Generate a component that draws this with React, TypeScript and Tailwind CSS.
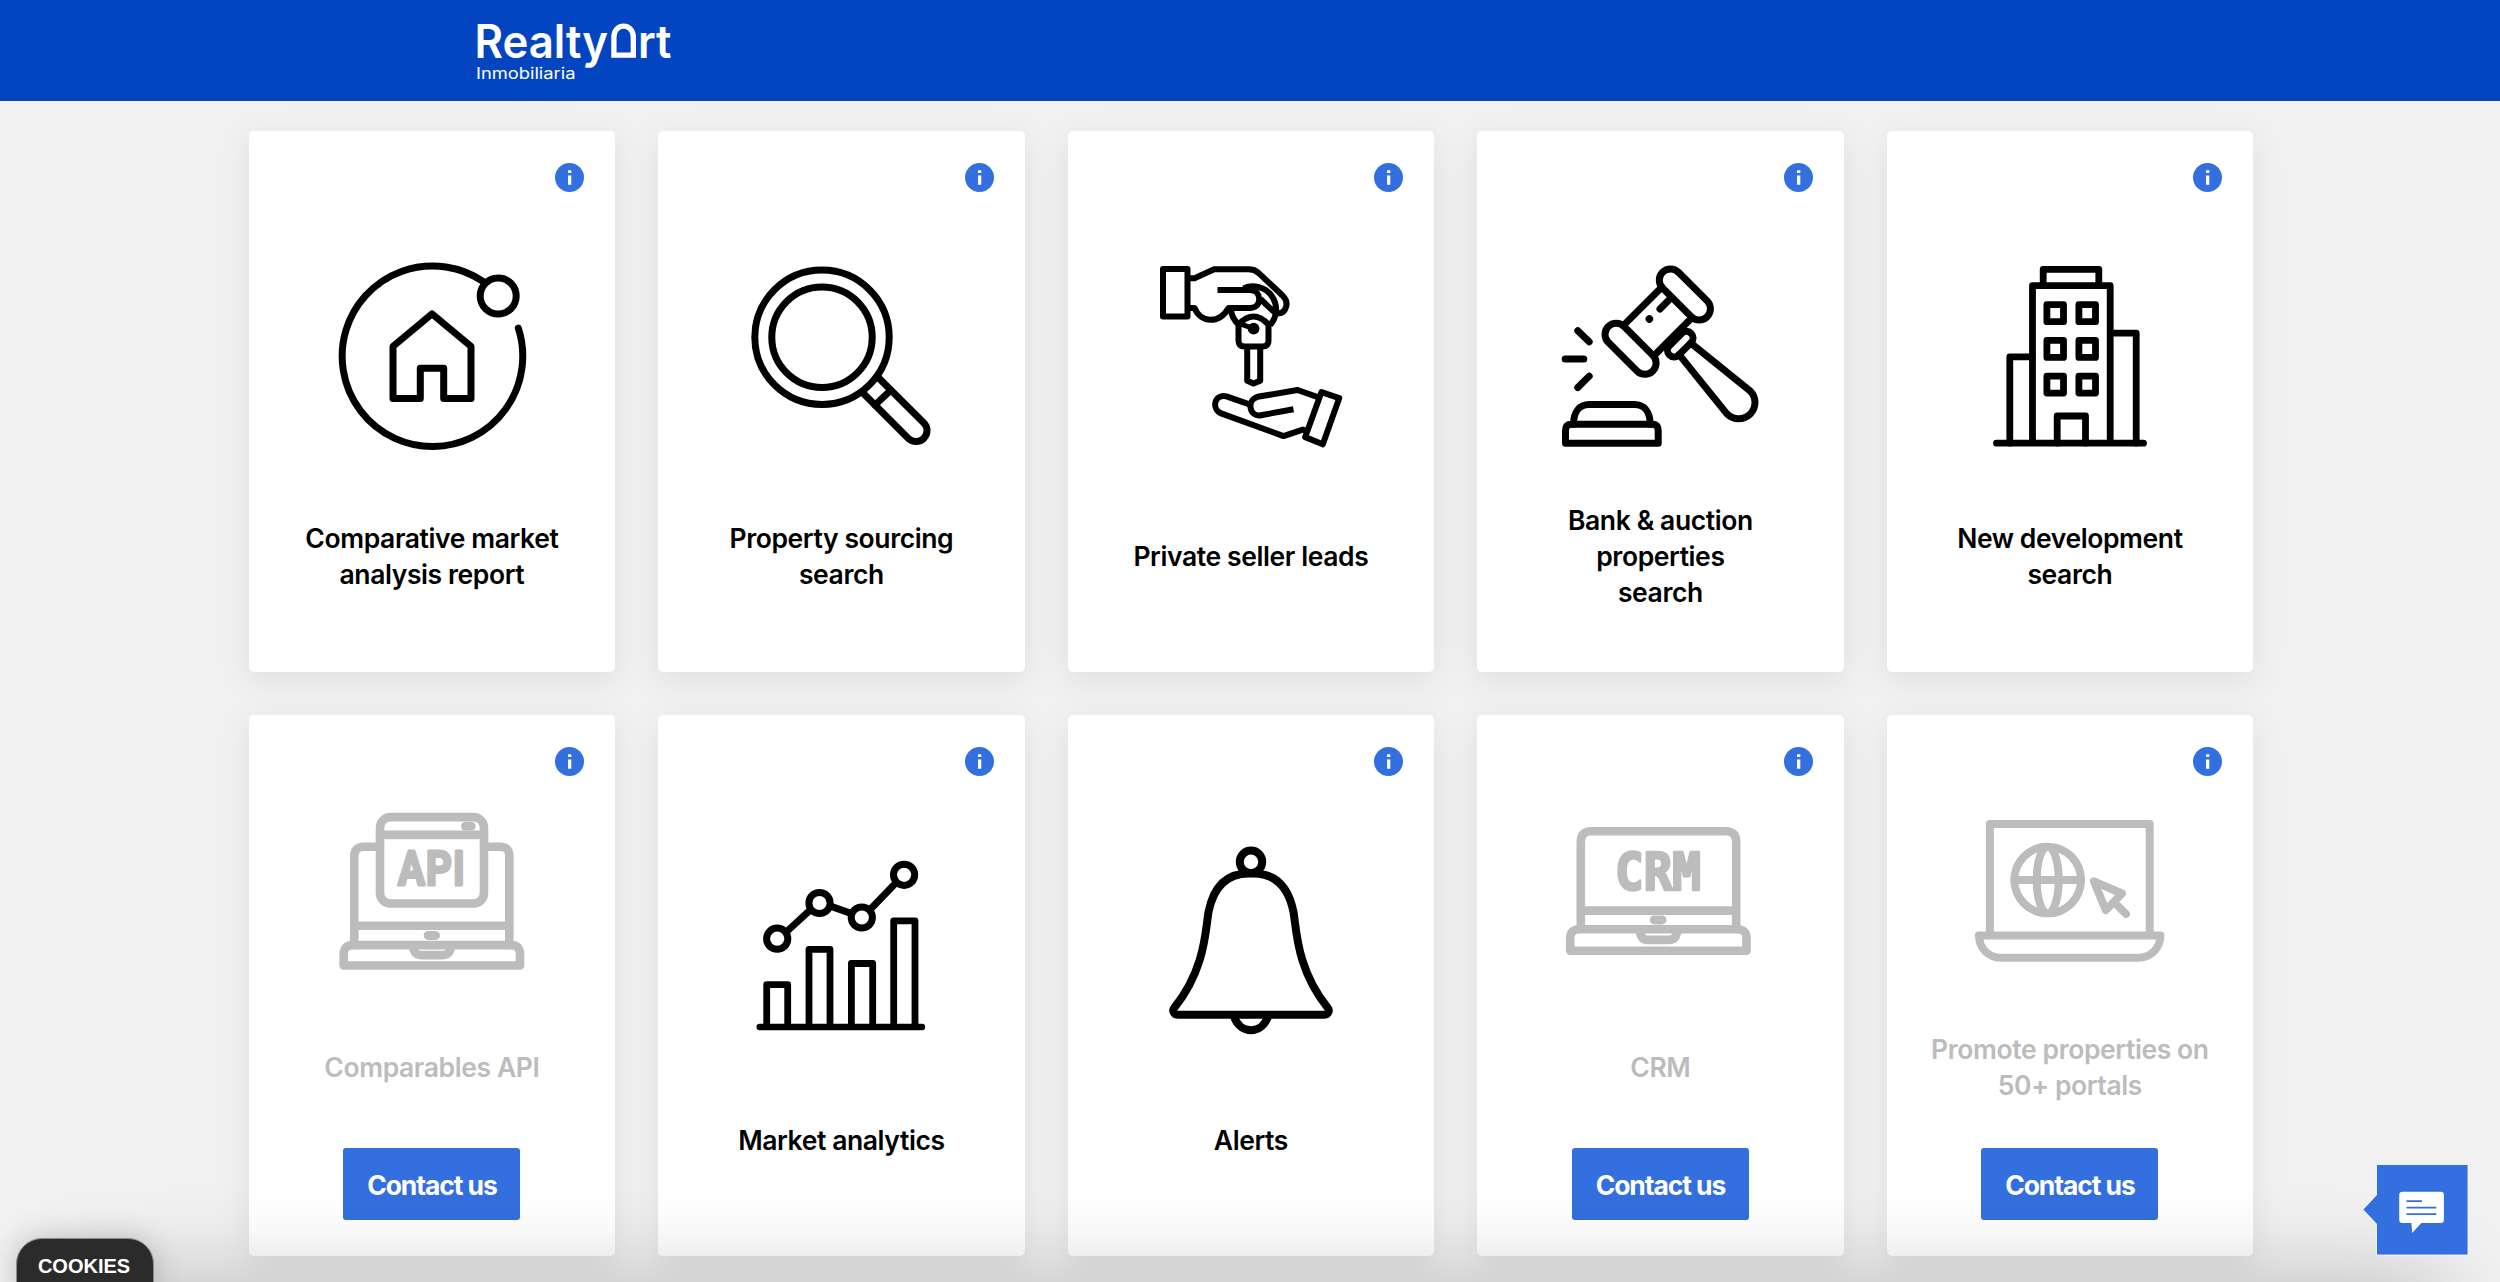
import type { ReactNode } from "react";

type Tool = {
  title: string[];
  icon: ReactNode;
  locked?: boolean;
};

function Icon({ children, width = 7 }: { children: ReactNode; width?: number }) {
  return (
    <svg
      viewBox="0 0 240 200"
      fill="none"
      stroke="currentColor"
      strokeWidth={width}
      strokeLinecap="round"
      strokeLinejoin="round"
      className="h-[200px] w-[240px] shrink-0"
    >
      {children}
    </svg>
  );
}

const ReportIcon = () => (
  <Icon>
    <path d="M206.3 72.2A90.3 90.3 0 1 1 171 25.4" />
    <circle cx="186.2" cy="40" r="18" />
    <path d="M120 57.9 159 90.4V142.6H131.7V112.2H108.3V142.6H81V90.4Z" />
  </Icon>
);

const SearchIcon = () => (
  <Icon>
    <circle cx="101" cy="81.3" r="67.2" />
    <circle cx="101" cy="81.3" r="50.2" />
    <path d="M157 121.3 202.7 166.7A10.8 10.8 0 0 1 187.4 182.4L142 137" />
    <path d="M169.5 134.5 154 149" />
  </Icon>
);

const KeysIcon = () => (
  <Icon width={6}>
    <path d="M32 12.9H56.5V60.4H32Z" />
    <path
      strokeLinecap="butt"
      d="M57 22.2H63.5L83.2 13.3H117.5Q123.5 13.3 127.5 16.9L151.5 39.5C156 44 156.5 49 154 53.5 151.5 58 145.5 58.5 142 55L129.5 43"
    />
    <path
      strokeLinecap="butt"
      d="M86.5 34H119C131 34 131.5 51.9 119.5 51.9H97.5C88 68.5 69.5 67 63.5 51.9H57"
    />
    <path strokeLinecap="butt" d="M112.5 32.5A23 23 0 0 1 139 69M99.8 53.5Q101 62.5 107.5 68.5" />
    <path d="M107.5 68.6Q122.5 52.5 137.5 68.6V84.4Q137.5 90.4 131.5 90.4H113.5Q107.5 90.4 107.5 84.4Z" />
    <path strokeWidth="5" d="M109.2 67.8 122 72.4" />
    <circle cx="122.6" cy="72.6" r="5.9" fill="currentColor" stroke="none" />
    <path d="M116.2 91V124.7L122.5 127.6 129.2 124.7V91" />
    <path d="M117 147.9 95.5 140.4C83 137.5 80 153.5 90.8 157.6L152.5 180.1 171.8 173.6 176 175" />
    <path
      strokeLinecap="butt"
      d="M187.5 141.3 166.5 134 126.5 140.8C115.5 144 118 161.5 130 159.2L162.5 153.3"
    />
    <path d="M190.5 136.1 208.2 142.2 191.8 188.3 174.2 181.1Z" />
  </Icon>
);

const GavelIcon = () => (
  <Icon>
    <path d="M37.8 74.7 49.2 85.8M25.2 102.9H43.8M49.2 120.1 37.8 131.5" />
    <path d="M33.5 168.3C33.5 156 39.5 148.6 49.2 148.6H94.5C104.2 148.6 110.2 156 110.2 168.3" />
    <path d="M25.5 187.2V174.5Q25.5 168.3 31.5 168.3H112.2Q118.2 168.3 118.2 174.5V187.2Z" />
    <g transform="translate(117.7 65.6) rotate(45)">
      <rect x="-31.5" y="-49.6" width="63" height="22.4" rx="11.2" />
      <rect x="-31.5" y="27.2" width="63" height="22.4" rx="11.2" />
      <path d="M-21.5 -27.2V27.2M21.5 -27.2V27.2M-7.3 -26V-10.5" />
      <circle cx="-7.7" cy="4.1" r="3.8" fill="currentColor" stroke="none" />
      <rect x="25.3" y="-15.3" width="13.2" height="30.6" rx="6.5" />
      <path d="M38.5 -8.2 114.5 -16.3A16.3 16.3 0 1 1 114.5 16.3L38.5 8.2" />
    </g>
  </Icon>
);

const BuildingIcon = () => (
  <Icon width={6.8}>
    <path d="M46.5 187.2H193.5M82.5 187V29.7H160.2V187M93.2 29V13.3H148.8V29" />
    <path d="M59.8 187V100.8H82M186.2 187V77.2H161M107.2 187V160H135.5V187" />
    {[57.2, 92.9, 128.6].map((y) => (
      <g key={y}>
        <rect x="96.9" y={y - 8.5} width="16.6" height="17" />
        <rect x="128.9" y={y - 8.5} width="16.6" height="17" />
      </g>
    ))}
  </Icon>
);

const ApiIcon = () => (
  <Icon width={8.6}>
    <rect x="68" y="26.1" width="104" height="86.4" rx="10.5" />
    <path d="M68 43.9H172" />
    <path d="M68 55.7H52Q42.3 55.7 42.3 65V154M172 55.7H188Q197.3 55.7 197.3 65V154M42.3 134.8H197.3" />
    <path d="M31.7 174.5V163Q31.7 154.1 41 154.1H199Q208 154.1 208 163V174.5Z" />
    <path d="M101.3 156C102 161 104.5 164.1 109 164.1H131C135.5 164.1 138 161 138.7 156" />
    <rect x="149" y="30.7" width="14.7" height="8.7" rx="4.3" fill="currentColor" stroke="none" />
    <rect x="111.7" y="140" width="16.3" height="8.9" rx="4.4" fill="currentColor" stroke="none" />
    <text
      x="86"
      y="94.3"
      textLength="68"
      lengthAdjust="spacingAndGlyphs"
      letterSpacing="1.5"
      fill="currentColor"
      strokeWidth="3"
      className="font-['Roboto',sans-serif] text-[48.5px] font-bold"
    >
      API
    </text>
  </Icon>
);

const ChartIcon = () => (
  <Icon>
    <path strokeWidth="6.4" d="M38.7 187H201" />
    <path
      strokeWidth="6.8"
      d="M45.7 186V144.7H66.7V186M88 186V109.4H109V186M130.4 186V123.5H151.7V186M172.7 186V80.9H194V186"
    />
    <circle cx="56.2" cy="98.7" r="10.6" />
    <circle cx="98.5" cy="63" r="10.6" />
    <circle cx="140.8" cy="77.5" r="10.6" />
    <circle cx="183.1" cy="34.8" r="10.6" />
    <path strokeLinecap="butt" d="M64.7 92.5 90.2 69.2M108.7 65.900 130.7 73.6M148.7 70 175.7 42" />
  </Icon>
);

const BellIcon = () => (
  <Icon width={8}>
    <circle cx="120" cy="21.8" r="11.2" />
    <path d="M120 33.5C98 32.5 83 44 77.5 72 74.5 89 74.5 129 43.5 167.5 41 170.5 42.5 174.8 47 174.8H193C197.5 174.8 199 170.5 196.5 167.5 165.5 129 165.5 89 162.5 72 157 44 142 32.5 120 33.5Z" />
    <path strokeLinecap="butt" d="M102.8 176C109 195 131 195 137.2 176" />
  </Icon>
);

const CrmIcon = () => (
  <Icon width={8.6}>
    <path d="M40.8 138V51Q40.8 40.2 51.5 40.2H185.5Q196.2 40.2 196.2 51V138M40.8 119.6H196.2" />
    <path d="M30.2 159.7V147.5Q30.2 138.2 39.5 138.2H197.2Q206.5 138.2 206.5 147.5V159.7Z" />
    <path d="M99.8 140C100.5 145.5 103 148.9 107.5 148.9H129.5C134 148.9 136.5 145.5 137.2 140" />
    <rect x="109.8" y="124.5" width="16.7" height="8.9" rx="4.4" fill="currentColor" stroke="none" />
    <text
      x="75"
      y="99.3"
      textLength="86"
      lengthAdjust="spacingAndGlyphs"
      fill="currentColor"
      strokeWidth="2.6"
      className="font-['DejaVu_Sans_Mono',monospace] text-[51px] font-bold"
    >
      CRM
    </text>
  </Icon>
);

const PortalsIcon = () => (
  <Icon width={8}>
    <path d="M39.9 144V33.1H199.7V144" />
    <path d="M28.9 144.5H210.4C210 157.5 201 166.7 188 166.7H51.3C38.3 166.7 29.3 157.5 28.9 144.5Z" />
    <circle cx="97.7" cy="89" r="33.3" />
    <ellipse cx="97.7" cy="89" rx="11" ry="33.3" />
    <path d="M64.4 89H131M143.9 90.3 172 102.5 155.8 119.2ZM165 112 176 123" />
  </Icon>
);

const tools: Tool[] = [
  { title: ["Comparative market", "analysis report"], icon: <ReportIcon /> },
  { title: ["Property sourcing", "search"], icon: <SearchIcon /> },
  { title: ["Private seller leads"], icon: <KeysIcon /> },
  { title: ["Bank & auction", "properties", "search"], icon: <GavelIcon /> },
  { title: ["New development", "search"], icon: <BuildingIcon /> },
  { title: ["Comparables API"], icon: <ApiIcon />, locked: true },
  { title: ["Market analytics"], icon: <ChartIcon /> },
  { title: ["Alerts"], icon: <BellIcon /> },
  { title: ["CRM"], icon: <CrmIcon />, locked: true },
  { title: ["Promote properties on", "50+ portals"], icon: <PortalsIcon />, locked: true },
];

function InfoButton() {
  return (
    <button aria-label="More info" className="size-[29px] shrink-0 text-[#336fde]">
      <svg viewBox="0 0 29 29" className="size-full">
        <circle cx="14.5" cy="14.5" r="14.5" fill="currentColor" />
        <path d="M13 7.3h3.3v2.8H13zM13 12.5h3.3v9.2H13z" fill="#fff" />
      </svg>
    </button>
  );
}

function ToolCard({ title, icon, locked }: Tool) {
  return (
    <article
      className={`flex h-[541px] flex-col items-center rounded-[5px] bg-white pt-8 shadow-[0_8px_34px_rgba(0,0,0,0.08)] ${
        locked ? "text-[#bcbcbc]" : "text-black"
      }`}
    >
      <div className="flex w-full justify-end pr-[31px]">
        <InfoButton />
      </div>
      <div className={locked ? "mt-[14.5px]" : "mt-16"}>{icon}</div>
      <h3
        className={`flex h-[120px] flex-col justify-center text-center text-[26.5px] leading-9 font-semibold tracking-[-0.4px] ${
          locked ? "mt-[16.5px]" : "mt-10"
        }`}
      >
        {title.map((line) => (
          <span key={line}>{line}</span>
        ))}
      </h3>
      {locked && (
        <button className="mt-[21px] h-[72px] w-[177px] rounded-[3px] bg-[#336fde] pt-[3px] text-[26.5px] font-bold tracking-[-1.1px] text-white">
          Contact us
        </button>
      )}
    </article>
  );
}

function Logo() {
  return (
    <svg
      viewBox="0 0 210 101"
      fill="#fff"
      aria-label="RealtyArt Inmobiliaria"
      className="h-[101px] w-[210px] font-['Inter',sans-serif]"
    >
      <text x="1.5" y="57.7" textLength="133.5" lengthAdjust="spacingAndGlyphs" className="text-[46px] font-semibold">
        Realty
      </text>
      {/* the "A" is a little doorway */}
      <path
        d="M140.9 55.1V36.8C140.9 22.6 160.3 22.6 160.3 36.8V55.1Z"
        fill="none"
        stroke="#fff"
        strokeWidth="5.3"
      />
      <text x="165" y="57.7" textLength="33.5" lengthAdjust="spacingAndGlyphs" className="text-[46px] font-semibold">
        rt
      </text>
      <text x="3" y="79.3" textLength="99.5" lengthAdjust="spacingAndGlyphs" className="text-base">
        Inmobiliaria
      </text>
    </svg>
  );
}

function ChatButton() {
  return (
    <button aria-label="Chat" className="absolute top-[1164px] left-[2362px] h-[92px] w-[107px]">
      <svg viewBox="0 0 107 92" className="size-full">
        <path
          d="M14.5 .5H106V91H14.5V60L1 45.5 14.5 31Z"
          fill="#336fde"
          stroke="#fff"
          strokeOpacity=".8"
        />
        <path
          d="M40.5 27.8H78.6Q81.9 27.8 81.9 31V55.8Q81.9 59 78.6 59H59.3L50.2 69 49.4 59H40.5Q37.2 59 37.2 55.8V31Q37.2 27.8 40.5 27.8Z"
          fill="#fff"
        />
        <path d="M44.5 37.1H60M44.5 43.7H74.3M44.5 50.2H74.3" stroke="#336fde" strokeWidth="1.8" />
      </svg>
    </button>
  );
}

export default function App() {
  return (
    <div className="relative h-[1282px] w-[2500px] overflow-hidden bg-[#f1f1f1] font-['Inter',sans-serif]">
      <header className="flex h-[101px] items-center bg-[#0345c1] pl-[473px]">
        <Logo />
      </header>

      <main className="grid grid-cols-5 gap-x-[43.3px] gap-y-[43.3px] pt-[30px] pr-[247px] pl-[248.8px]">
        {tools.map((tool) => (
          <ToolCard key={tool.title[0]} {...tool} />
        ))}
      </main>

      {/* shadow cast by the bar sitting just under the fold */}
      <div className="absolute top-[1282px] right-[60px] left-[60px] h-20 shadow-[0_0_90px_rgba(0,0,0,0.24)]" />

      <button className="absolute top-[1238px] left-4 h-[54px] w-[138px] rounded-t-[26px] border border-[#8a8a8a] bg-[#2b2b2b] pt-0.5 pr-0.5 font-['Liberation_Sans',sans-serif] text-xl font-bold text-white shadow-[0_0_30px_rgba(0,0,0,0.2)]">
        COOKIES
      </button>

      <ChatButton />
    </div>
  );
}
